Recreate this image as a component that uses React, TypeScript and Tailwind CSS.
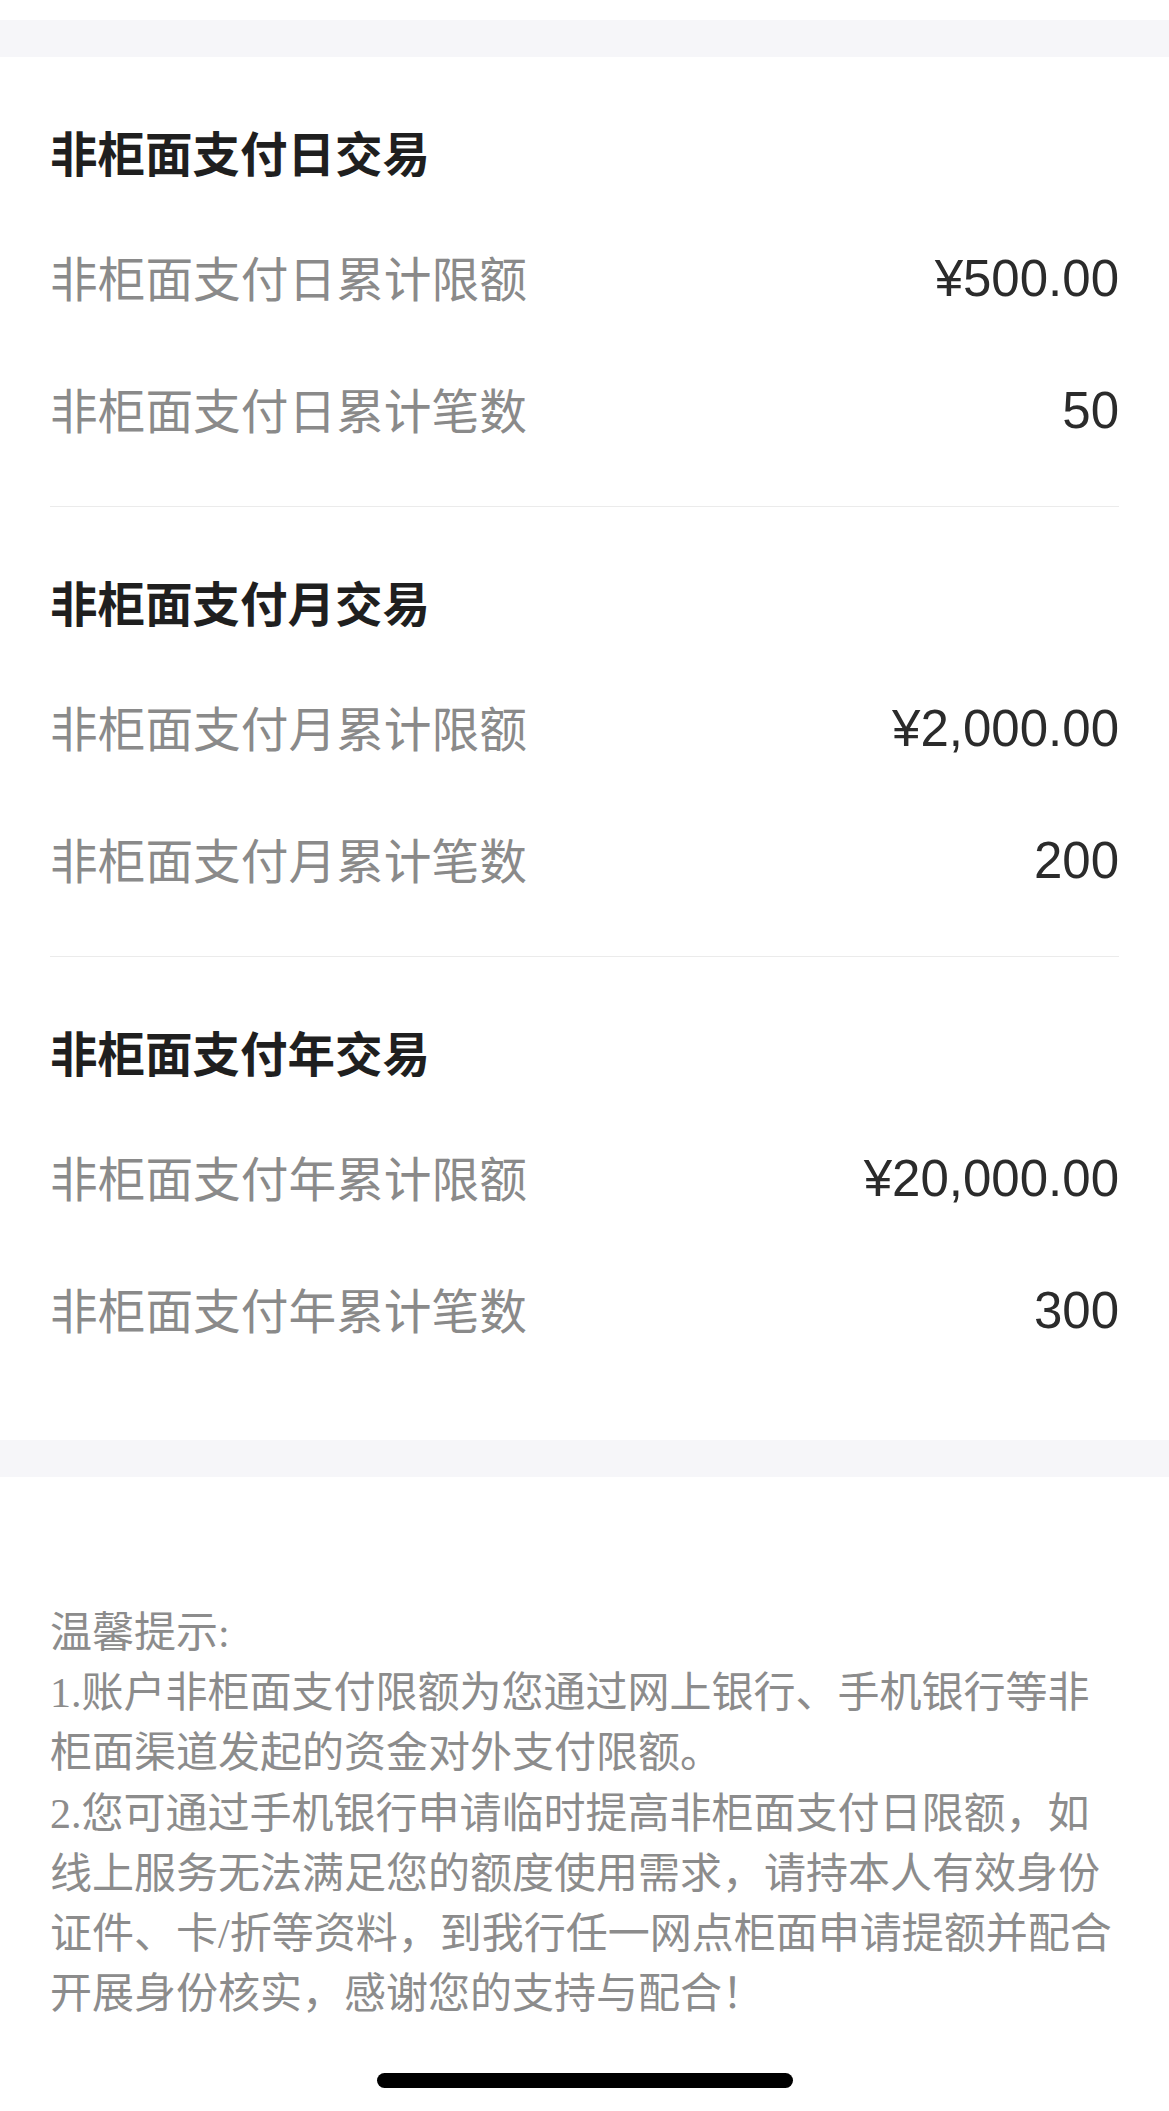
const SECTIONS = [
  {
    title: "非柜面支付日交易",
    rows: [
      { label: "非柜面支付日累计限额", value: "¥500.00" },
      { label: "非柜面支付日累计笔数", value: "50" },
    ],
  },
  {
    title: "非柜面支付月交易",
    rows: [
      { label: "非柜面支付月累计限额", value: "¥2,000.00" },
      { label: "非柜面支付月累计笔数", value: "200" },
    ],
  },
  {
    title: "非柜面支付年交易",
    rows: [
      { label: "非柜面支付年累计限额", value: "¥20,000.00" },
      { label: "非柜面支付年累计笔数", value: "300" },
    ],
  },
];

const NOTICE = [
  "温馨提示:",
  "1.账户非柜面支付限额为您通过网上银行、手机银行等非",
  "柜面渠道发起的资金对外支付限额。",
  "2.您可通过手机银行申请临时提高非柜面支付日限额，如",
  "线上服务无法满足您的额度使用需求，请持本人有效身份",
  "证件、卡/折等资料，到我行任一网点柜面申请提额并配合",
  "开展身份核实，感谢您的支持与配合！",
];

const CJK = "font-['Noto_Sans_CJK_SC',sans-serif]";
const NUM = "font-['Liberation_Sans','Noto_Sans_CJK_SC',sans-serif]";

export default function App() {
  return (
    <div className="flex h-[2111px] w-full flex-col bg-white">
      <div className="h-[20px] bg-white" />
      <div className="h-[37px] bg-[#f6f6f9]" />

      {/* limit sections */}
      <section className="px-[50px] pb-[34px]">
        {SECTIONS.map((s, i) => (
          <div
            key={s.title}
            className={
              i < SECTIONS.length - 1
                ? "border-b border-[#ebebeb] pb-[31px] pt-[36px]"
                : "pb-[31px] pt-[36px]"
            }
          >
            <div
              className={`flex h-[118px] items-center text-[47.5px] font-semibold text-[#1f1f1f] ${CJK}`}
            >
              {s.title}
            </div>
            {s.rows.map((r) => (
              <div key={r.label} className="flex h-[132px] items-center justify-between">
                <span className={`text-[47.7px] text-[#8a8a8a] ${CJK}`}>{r.label}</span>
                <span className={`mt-[5px] text-[51px] text-[#2b2b2b] ${NUM}`}>{r.value}</span>
              </div>
            ))}
          </div>
        ))}
      </section>

      <div className="h-[37px] bg-[#f6f6f9]" />

      {/* tips */}
      <div
        className={`px-[50px] pt-[126px] font-['Liberation_Serif','Noto_Sans_CJK_SC',serif] text-[42px] leading-[60.2px] text-[#8c8c8c]`}
      >
        {NOTICE.map((line) => (
          <div key={line} className="whitespace-nowrap">
            {line}
          </div>
        ))}
      </div>

      <div className="flex flex-1 items-end justify-center pb-[23px]">
        <div className="h-[15px] w-[416px] rounded-full bg-black" />
      </div>
    </div>
  );
}
